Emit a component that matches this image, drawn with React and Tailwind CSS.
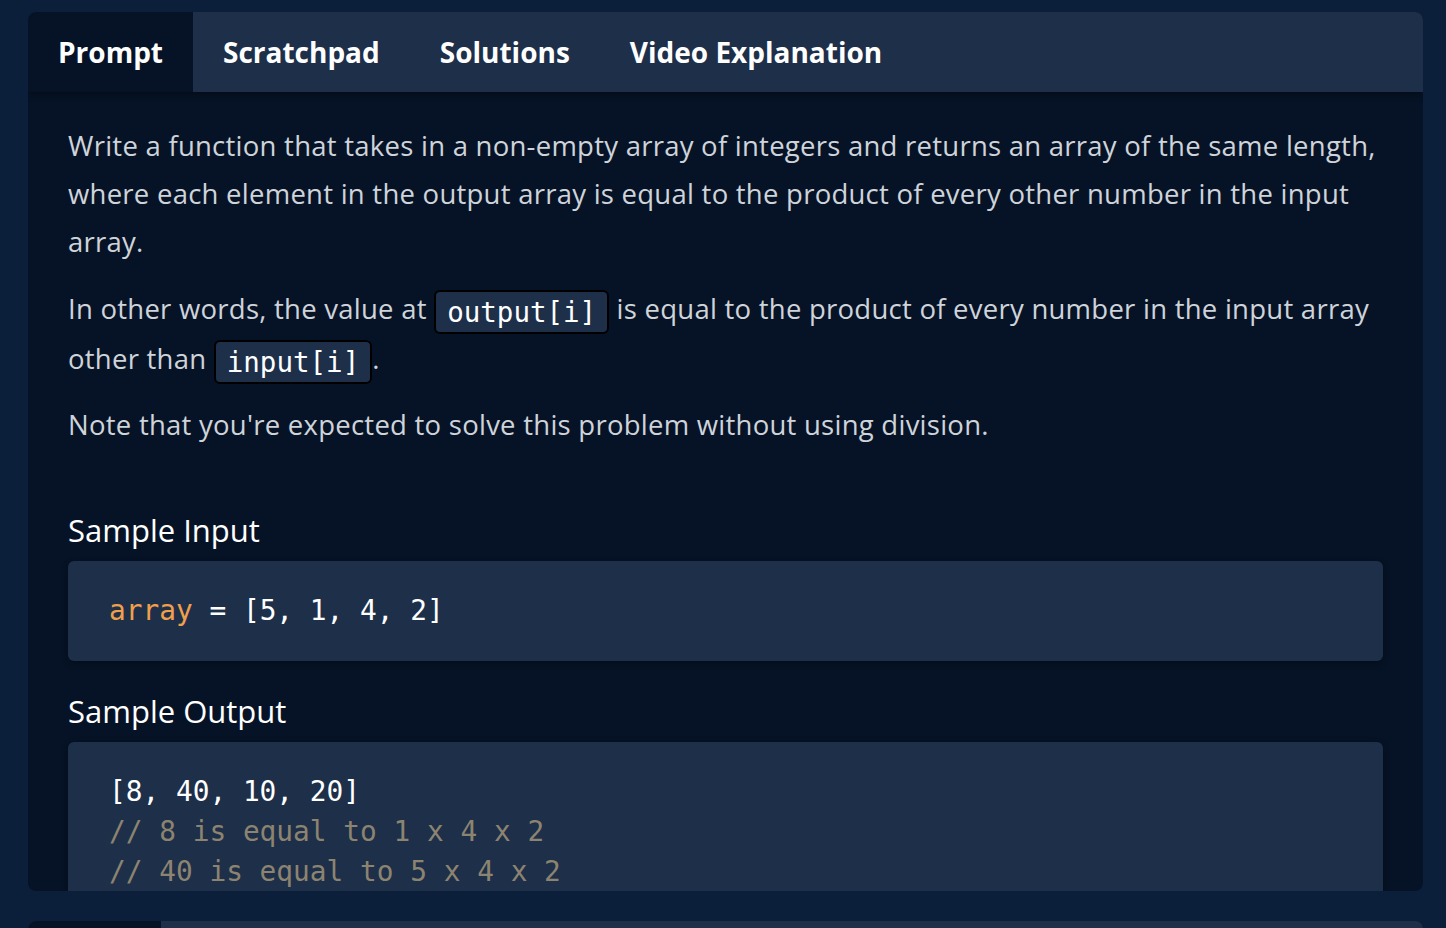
import React from "react";

const sans = { fontFamily: '"Open Sans", "Noto Sans", sans-serif' };
const mono = { fontFamily: '"DejaVu Sans Mono", "Liberation Mono", monospace' };

function Code({ children }) {
  return (
    <code
      style={mono}
      className="inline-block rounded-[6px] border-2 border-black bg-[#1e2f4a] px-[11px] text-[27.5px] leading-[40px] tracking-normal text-white align-middle"
    >
      {children}
    </code>
  );
}

function Tab({ label, active }) {
  return (
    <div
      className={
        "flex h-full items-center px-[30px] text-[28px] font-bold text-white " +
        (active ? "bg-[#061326]" : "")
      }
    >
      {label}
    </div>
  );
}

export default function App() {
  return (
    <div style={sans} className="h-[928px] w-[1446px] overflow-hidden bg-[#0c1f3a] px-[28px] pt-[12px]">
      <div className="flex h-[879px] w-[1395px] flex-col overflow-hidden rounded-[8px] bg-[#061326]">
        <div className="relative z-10 flex h-[80px] shrink-0 bg-[#1e2f4a] shadow-[0_3px_6px_rgba(0,0,0,0.35)]">
          <Tab label="Prompt" active />
          <Tab label="Scratchpad" />
          <Tab label="Solutions" />
          <Tab label="Video Explanation" />
        </div>
        <div className="flex-1 overflow-hidden pl-[40px] pr-[40px] pt-[30px]">
          <p className="text-[27.5px] leading-[48px] tracking-[0.25px] text-[#cfd3da]">
            Write a function that takes in a non-empty array of integers and returns an array of the same length,
            where each element in the output array is equal to the product of every other number in the input
            array.
          </p>
          <p className="mt-[18px] text-[27.5px] leading-[50px] tracking-[0.25px] text-[#cfd3da]">
            In other words, the value at <Code>output[i]</Code> is equal to the product of every number in the input array
            other than <Code>input[i]</Code>.
          </p>
          <p className="mt-[17px] text-[27.5px] leading-[48px] tracking-[0.25px] text-[#cfd3da]">
            Note that you're expected to solve this problem without using division.
          </p>
          <h3 className="mt-[61px] text-[31px] font-medium leading-[40px] text-white">Sample Input</h3>
          <div
            style={mono}
            className="mt-[11px] flex h-[100px] items-center rounded-[6px] bg-[#1e2f4a] px-[41px] text-[27.8px] text-white shadow-[0_2px_6px_rgba(0,0,0,0.4)]"
          >
            <span className="text-[#f0a04b]">array</span>
            <span className="whitespace-pre"> = [5, 1, 4, 2]</span>
          </div>
          <h3 className="mt-[30px] text-[31px] font-medium leading-[40px] text-white">Sample Output</h3>
          <div
            style={mono}
            className="mt-[11px] rounded-[6px] bg-[#1e2f4a] px-[41px] pt-[30px] pb-[28px] text-[27.8px] leading-[40px] text-white shadow-[0_2px_6px_rgba(0,0,0,0.4)]"
          >
            <div className="whitespace-pre">[8, 40, 10, 20]</div>
            <div className="whitespace-pre text-[#8c8470]">// 8 is equal to 1 x 4 x 2</div>
            <div className="whitespace-pre text-[#8c8470]">// 40 is equal to 5 x 4 x 2</div>
            <div className="whitespace-pre text-[#8c8470]">// 10 is equal to 5 x 1 x 2</div>
            <div className="whitespace-pre text-[#8c8470]">// 20 is equal to 5 x 1 x 4</div>
          </div>
        </div>
      </div>
      <div className="mt-[30px] flex h-[80px] w-[1395px] overflow-hidden rounded-t-[8px] bg-[#1e2f4a]">
        <div className="h-full w-[133px] bg-[#061326]" />
      </div>
    </div>
  );
}
